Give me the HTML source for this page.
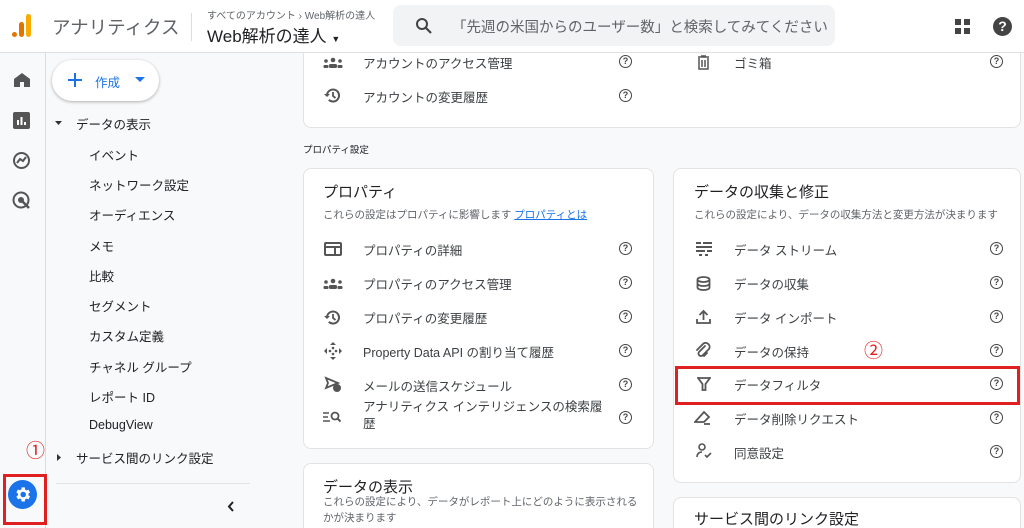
<!DOCTYPE html>
<html><head><meta charset="utf-8"><style>
*{margin:0;padding:0;box-sizing:border-box}
html,body{width:1024px;height:528px;overflow:hidden}
body{background:#f8f9fa;font-family:"Liberation Sans","Noto Sans CJK JP",sans-serif;color:#3c4043;position:relative}
.a{position:absolute;white-space:nowrap}
.hdr{position:absolute;left:0;top:0;width:1024px;height:53px;background:#fff;border-bottom:1px solid #e0e0e0;z-index:5}
.rail{position:absolute;left:0;top:53px;width:46px;height:475px;border-right:1px solid #dadce0;background:#f8f9fa}
.card{position:absolute;background:#fff;border:1px solid #e3e3e3;border-radius:8px}
.t13{font-size:12.5px;color:#3c4043}
.q{position:absolute;width:13px;height:13px;border:1.6px solid #444;border-radius:50%;font-size:9px;font-weight:bold;text-align:center;line-height:10px;color:#444}
.si{position:absolute;left:89px;font-size:12.5px;color:#202124}
</style></head><body>
<div class="hdr">
 <svg class="a" style="left:11px;top:13px" width="22" height="26"><rect x="1" y="19" width="5" height="5" rx="2.5" fill="#e37400"/><rect x="8" y="9" width="5" height="15" rx="2.5" fill="#e37400"/><rect x="15" y="1" width="5" height="23" rx="2.5" fill="#f9ab00"/></svg>
 <div class="a" style="left:52px;top:14px;font-size:18.5px;color:#5f6368">アナリティクス</div>
 <div class="a" style="left:191px;top:13px;width:1px;height:28px;background:#dadce0"></div>
 <div class="a" style="left:207px;top:7px;font-size:10px;color:#5f6368">すべてのアカウント › Web解析の達人</div>
 <div class="a" style="left:207px;top:22px;font-size:17px;color:#202124">Web解析の達人 <span style="font-size:9px">▼</span></div>
 <div class="a" style="left:393px;top:5px;width:442px;height:41px;background:#f1f3f4;border-radius:8px"></div>
 <svg class="a" style="left:415px;top:17px" width="18" height="18"><circle cx="7" cy="7" r="5" stroke="#444" stroke-width="2" fill="none"/><path d="M11 11l5 5" stroke="#444" stroke-width="2.2"/></svg>
 <div class="a" style="left:452px;top:16px;font-size:14.5px;color:#5f6368">「先週の米国からのユーザー数」と検索してみてください</div>
 <svg class="a" style="left:955px;top:19px" width="16" height="16" fill="#444"><rect x="0" y="0" width="6" height="6"/><rect x="9" y="0" width="6" height="6"/><rect x="0" y="9" width="6" height="6"/><rect x="9" y="9" width="6" height="6"/></svg>
 <div class="a" style="left:993px;top:17px;width:19px;height:19px;border-radius:50%;background:#444;color:#fff;font-size:14px;font-weight:bold;text-align:center;line-height:19px">?</div>
</div>
<div class="rail"></div>
<svg class="a" style="left:13px;top:72px" width="18" height="16" fill="#555"><path d="M9 1L1 7v8h6v-5h4v5h6V7z"/></svg>
<svg class="a" style="left:13px;top:112px" width="17" height="17"><rect width="17" height="17" rx="2" fill="#555"/><path d="M5 13V8M8.5 13V5M12 13v-3" stroke="#fff" stroke-width="2"/></svg>
<svg class="a" style="left:12px;top:151px" width="19" height="19"><circle cx="9.5" cy="9.5" r="7.5" fill="none" stroke="#555" stroke-width="2"/><path d="M5 12l3-4 3 2 3-4" stroke="#555" stroke-width="2" fill="none"/></svg>
<svg class="a" style="left:12px;top:191px" width="19" height="19"><circle cx="9" cy="9" r="7.5" fill="none" stroke="#555" stroke-width="2"/><circle cx="9" cy="9" r="3" fill="#555"/><path d="M10 10l7 7" stroke="#555" stroke-width="2.5"/></svg>
<div class="a" style="left:8px;top:480px;width:29px;height:29px;border-radius:50%;background:#1a73e8"></div>
<svg class="a" style="left:13px;top:485px" width="19" height="19" viewBox="0 0 24 24" fill="#fff"><path d="M19.4 13a7.5 7.5 0 000-2l2.1-1.6-2-3.5-2.5 1a7 7 0 00-1.7-1L14.9 3h-4l-.4 2.7a7 7 0 00-1.7 1l-2.5-1-2 3.5L6.4 11a7.5 7.5 0 000 2l-2.1 1.6 2 3.5 2.5-1a7 7 0 001.7 1l.4 2.7h4l.4-2.7a7 7 0 001.7-1l2.5 1 2-3.5zM12.9 15.5a3.5 3.5 0 110-7 3.5 3.5 0 010 7z"/></svg>
<div class="a" style="left:3px;top:474px;width:44px;height:51px;border:3px solid #e02020"></div>
<div class="a" style="left:26px;top:436px;font-size:19px;color:#e02020">①</div>

<div class="a" style="left:52px;top:60px;width:107px;height:41px;background:#fff;border-radius:21px;box-shadow:0 1px 3px rgba(0,0,0,.3)"></div>
<svg class="a" style="left:67px;top:72px" width="16" height="16"><path d="M8 1v14M1 8h14" stroke="#1a73e8" stroke-width="2"/></svg>
<div class="a" style="left:95px;top:72px;font-size:12.5px;color:#1a73e8">作成</div>
<svg class="a" style="left:135px;top:77px" width="10" height="6"><path d="M0 0h10L5 5z" fill="#1a73e8"/></svg>
<svg class="a" style="left:55px;top:121px" width="7" height="5"><path d="M0 0h7L3.5 4z" fill="#333"/></svg>
<div class="a" style="left:76px;top:114px;font-size:12.5px;color:#202124">データの表示</div>
<div class="si" style="top:145px">イベント</div>
<div class="si" style="top:175px">ネットワーク設定</div>
<div class="si" style="top:205px">オーディエンス</div>
<div class="si" style="top:236px">メモ</div>
<div class="si" style="top:266px">比較</div>
<div class="si" style="top:296px">セグメント</div>
<div class="si" style="top:326px">カスタム定義</div>
<div class="si" style="top:357px">チャネル グループ</div>
<div class="si" style="top:387px">レポート ID</div>
<div class="si" style="top:418px">DebugView</div>
<svg class="a" style="left:57px;top:454px" width="5" height="7"><path d="M0 0v7l4-3.5z" fill="#333"/></svg>
<div class="a" style="left:76px;top:448px;font-size:12.5px;color:#202124">サービス間のリンク設定</div>
<div class="a" style="left:56px;top:483px;width:194px;height:1px;background:#e3e3e3"></div>
<svg class="a" style="left:227px;top:501px" width="8" height="11"><path d="M6 1L2 5.5 6 10" stroke="#202124" stroke-width="2" fill="none"/></svg>

<div class="card" style="left:303px;top:53px;width:718px;height:75px;border-top:none;border-radius:0 0 8px 8px"></div>
<svg class="a" style="left:323px;top:57px" width="20" height="12" fill="#555"><circle cx="3" cy="4" r="1.8"/><circle cx="10" cy="3" r="2.3"/><circle cx="17" cy="4" r="1.8"/><rect x="0.5" y="8" width="5" height="3" rx="1"/><rect x="6" y="7" width="8" height="4" rx="1.5"/><rect x="14.5" y="8" width="5" height="3" rx="1"/></svg>
<div class="a t13" style="left:363px;top:53px">アカウントのアクセス管理</div>
<div class="q" style="left:619px;top:55px">?</div>
<svg class="a" style="left:324px;top:87px" width="17" height="17"><path d="M3 8.5a6 6 0 111.8 4.3" fill="none" stroke="#555" stroke-width="2"/><path d="M0 7l3 3 3-3" fill="#555"/><path d="M9 5v4l2.5 2" stroke="#555" stroke-width="1.8" fill="none"/></svg>
<div class="a t13" style="left:363px;top:87px">アカウントの変更履歴</div>
<div class="q" style="left:619px;top:89px">?</div>
<svg class="a" style="left:697px;top:55px" width="13" height="15"><path d="M1 2h11M4 1h5M2 3v11h9V3M5 5v7M8 5v7" stroke="#555" stroke-width="1.5" fill="none"/></svg>
<div class="a t13" style="left:734px;top:53px">ゴミ箱</div>
<div class="q" style="left:990px;top:55px">?</div>

<div class="a" style="left:303px;top:142px;font-size:9.5px;color:#202124">プロパティ設定</div>

<div class="card" style="left:303px;top:168px;width:351px;height:281px"></div>
<div class="a" style="left:323px;top:181px;font-size:15px;color:#202124">プロパティ</div>
<div class="a" style="left:323px;top:207px;font-size:10.5px;color:#5f6368">これらの設定はプロパティに影響します <span style="color:#1a73e8;text-decoration:underline">プロパティとは</span></div>
<svg class="a" style="left:324px;top:242px" width="18" height="14"><rect x="1" y="1" width="16" height="12" rx="1" fill="none" stroke="#555" stroke-width="2"/><path d="M1 5h16M11 6v7" stroke="#555" stroke-width="2"/></svg>
<div class="a t13" style="left:363px;top:240px">プロパティの詳細</div><div class="q" style="left:619px;top:242px">?</div>
<svg class="a" style="left:323px;top:278px" width="20" height="12" fill="#555"><circle cx="3" cy="4" r="1.8"/><circle cx="10" cy="3" r="2.3"/><circle cx="17" cy="4" r="1.8"/><rect x="0.5" y="8" width="5" height="3" rx="1"/><rect x="6" y="7" width="8" height="4" rx="1.5"/><rect x="14.5" y="8" width="5" height="3" rx="1"/></svg>
<div class="a t13" style="left:363px;top:274px">プロパティのアクセス管理</div><div class="q" style="left:619px;top:276px">?</div>
<svg class="a" style="left:324px;top:309px" width="17" height="17"><path d="M3 8.5a6 6 0 111.8 4.3" fill="none" stroke="#555" stroke-width="2"/><path d="M0 7l3 3 3-3" fill="#555"/><path d="M9 5v4l2.5 2" stroke="#555" stroke-width="1.8" fill="none"/></svg>
<div class="a t13" style="left:363px;top:308px">プロパティの変更履歴</div><div class="q" style="left:619px;top:310px">?</div>
<svg class="a" style="left:324px;top:342px" width="18" height="18" fill="#555"><path d="M9 0l3 3H6zM9 18l3-3H6zM0 9l3-3v6zM18 9l-3-3v6z"/><circle cx="6" cy="9" r="1.3"/><circle cx="12" cy="9" r="1.3"/><circle cx="9" cy="6" r="1.3"/><circle cx="9" cy="12" r="1.3"/></svg>
<div class="a t13" style="left:363px;top:342px">Property Data API の割り当て履歴</div><div class="q" style="left:619px;top:344px">?</div>
<svg class="a" style="left:324px;top:376px" width="18" height="16"><path d="M2 2l12 5-12 5 2-5z" fill="none" stroke="#555" stroke-width="1.8"/><circle cx="13" cy="12" r="4" fill="#555"/></svg>
<div class="a t13" style="left:363px;top:376px">メールの送信スケジュール</div><div class="q" style="left:619px;top:378px">?</div>
<svg class="a" style="left:323px;top:411px" width="18" height="13"><path d="M0 2h6M0 6h5M0 10h7" stroke="#555" stroke-width="1.6"/><circle cx="12" cy="5" r="3.5" fill="none" stroke="#555" stroke-width="1.8"/><path d="M14.5 7.5l3 3" stroke="#555" stroke-width="2"/></svg>
<div class="a t13" style="left:363px;top:399px;line-height:17px">アナリティクス インテリジェンスの検索履<br>歴</div><div class="q" style="left:619px;top:411px">?</div>

<div class="card" style="left:303px;top:463px;width:351px;height:75px"></div>
<div class="a" style="left:323px;top:476px;font-size:15px;color:#202124">データの表示</div>
<div class="a" style="left:323px;top:494px;font-size:10.5px;color:#5f6368;line-height:16px">これらの設定により、データがレポート上にどのように表示される<br>かが決まります</div>

<div class="card" style="left:673px;top:168px;width:348px;height:315px"></div>
<div class="a" style="left:694px;top:181px;font-size:15px;color:#202124">データの収集と修正</div>
<div class="a" style="left:694px;top:207px;font-size:10.5px;color:#5f6368">これらの設定により、データの収集方法と変更方法が決まります</div>
<svg class="a" style="left:696px;top:242px" width="16" height="14" fill="#555"><rect x="0" y="0" width="5" height="2"/><rect x="7" y="0" width="9" height="2"/><rect x="0" y="4" width="16" height="2"/><rect x="0" y="8" width="9" height="2"/><rect x="11" y="8" width="5" height="2"/><rect x="3" y="12" width="3" height="2"/><rect x="9" y="12" width="3" height="2"/></svg>
<div class="a t13" style="left:734px;top:240px">データ ストリーム</div><div class="q" style="left:990px;top:242px">?</div>
<svg class="a" style="left:696px;top:276px" width="15" height="15"><ellipse cx="7.5" cy="3.5" rx="6" ry="2.5" fill="none" stroke="#555" stroke-width="1.8"/><path d="M1.5 3.5v8c0 1.4 2.7 2.5 6 2.5s6-1.1 6-2.5v-8M1.5 7.5c0 1.4 2.7 2.5 6 2.5s6-1.1 6-2.5" fill="none" stroke="#555" stroke-width="1.8"/></svg>
<div class="a t13" style="left:734px;top:274px">データの収集</div><div class="q" style="left:990px;top:276px">?</div>
<svg class="a" style="left:696px;top:309px" width="15" height="15"><path d="M7.5 11V2M3.5 6l4-4 4 4M1 10v4h13v-4" fill="none" stroke="#555" stroke-width="1.8"/></svg>
<div class="a t13" style="left:734px;top:308px">データ インポート</div><div class="q" style="left:990px;top:310px">?</div>
<svg class="a" style="left:695px;top:342px" width="17" height="17"><path d="M10 4L4 10a2.5 2.5 0 003.5 3.5L14 7a4 4 0 00-5.5-5.5L2 8M12 11l-3 3" fill="none" stroke="#555" stroke-width="1.8" stroke-linecap="round"/></svg>
<div class="a t13" style="left:734px;top:342px">データの保持</div><div class="q" style="left:990px;top:344px">?</div>
<div class="a" style="left:864px;top:336px;font-size:19px;color:#e02020">②</div>
<svg class="a" style="left:697px;top:377px" width="14" height="14"><path d="M1 1h12L8.5 7v6h-3V7z" fill="none" stroke="#555" stroke-width="1.8"/></svg>
<div class="a t13" style="left:734px;top:375px">データフィルタ</div><div class="q" style="left:990px;top:377px">?</div>
<div class="a" style="left:675px;top:366px;width:345px;height:39px;border:3px solid #e02020"></div>
<svg class="a" style="left:694px;top:409px" width="20" height="17"><path d="M1 13L10 3l5 5-5 5zM10 15h6" fill="none" stroke="#555" stroke-width="1.8"/></svg>
<div class="a t13" style="left:734px;top:409px">データ削除リクエスト</div><div class="q" style="left:990px;top:411px">?</div>
<svg class="a" style="left:696px;top:443px" width="18" height="16"><circle cx="6" cy="4" r="3" fill="none" stroke="#555" stroke-width="1.6"/><path d="M1 14c0-3 2-5 5-5M9 12l2 2 4-4" fill="none" stroke="#555" stroke-width="1.6"/></svg>
<div class="a t13" style="left:734px;top:443px">同意設定</div><div class="q" style="left:990px;top:445px">?</div>

<div class="card" style="left:673px;top:497px;width:348px;height:40px;border-bottom:none"></div>
<div class="a" style="left:694px;top:508px;font-size:15px;color:#202124">サービス間のリンク設定</div>
</body></html>
